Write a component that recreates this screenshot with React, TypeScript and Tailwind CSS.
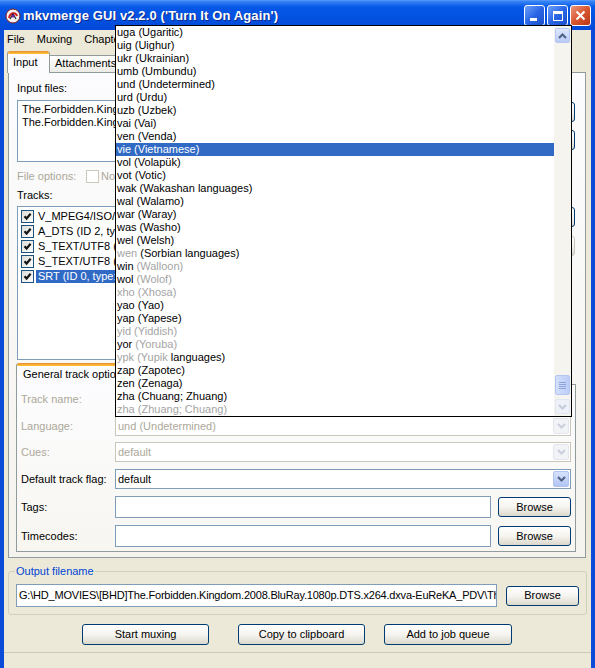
import React from "react";

const FONT = "font-['Liberation_Sans',Arial,sans-serif]";

function Chevron({ up = false, color = "#4d6185" }: { up?: boolean; color?: string }) {
  return (
    <svg width="9" height="6" viewBox="0 0 9 6">
      <polyline
        points={up ? "1,5 4.5,1.5 8,5" : "1,1 4.5,4.5 8,1"}
        fill="none"
        stroke={color}
        strokeWidth="2"
      />
    </svg>
  );
}

function XpButton({
  className = "",
  children,
  disabled = false,
}: {
  className?: string;
  children?: React.ReactNode;
  disabled?: boolean;
}) {
  return (
    <div
      className={`flex items-center justify-center rounded-[3px] border bg-linear-to-b from-[#ffffff] via-[#f5f4ef] to-[#dcd8cc] ${
        disabled ? "border-[#c9c7ba] text-[#aca899]" : "border-[#003c74] text-black"
      } ${className}`}
    >
      {children}
    </div>
  );
}

function Check({ checked = false, disabled = false }: { checked?: boolean; disabled?: boolean }) {
  return (
    <div
      className={`w-[13px] h-[13px] shrink-0 border flex items-center justify-center ${
        disabled ? "border-[#cac8bb] bg-white" : "border-[#1c5180] bg-linear-to-br from-[#dcdcd7] to-[#ffffff]"
      }`}
    >
      {checked && (
        <svg width="9" height="9" viewBox="0 0 9 9">
          <polyline points="1.5,4.2 3.6,6.5 7.6,1.8" fill="none" stroke="#161616" strokeWidth="2.2" />
        </svg>
      )}
    </div>
  );
}

function Combo({ text, disabled = false }: { text: string; disabled?: boolean }) {
  return (
    <div
      className={`flex-1 h-full flex items-center border bg-white pl-[2px] pr-[1px] ${
        disabled ? "border-[#c9c7ba] text-[#aca899]" : "border-[#7f9db9] text-black"
      }`}
    >
      <span className="flex-1 truncate">{text}</span>
      <div
        className={`w-[16px] h-[calc(100%-2px)] rounded-[2px] border flex items-center justify-center ${
          disabled
            ? "bg-[#f2f3f6] border-[#e3e6ed]"
            : "bg-linear-to-b from-[#d6e1fd] to-[#b2c5f4] border-[#b0c3ee]"
        }`}
      >
        <Chevron color={disabled ? "#c8cedc" : "#4d6185"} />
      </div>
    </div>
  );
}

function TextBox({ className = "" }: { className?: string }) {
  return <div className={`h-full border border-[#7f9db9] bg-white ${className}`} />;
}

const items: string[] = [
  "uga (Ugaritic)",
  "uig (Uighur)",
  "ukr (Ukrainian)",
  "umb (Umbundu)",
  "und (Undetermined)",
  "urd (Urdu)",
  "uzb (Uzbek)",
  "vai (Vai)",
  "ven (Venda)",
  "vie (Vietnamese)",
  "vol (Volapük)",
  "vot (Votic)",
  "wak (Wakashan languages)",
  "wal (Walamo)",
  "war (Waray)",
  "was (Washo)",
  "wel (Welsh)",
  "|wen| (Sorbian languages)",
  "win |(Walloon)",
  "wol |(Wolof)",
  "|xho (Xhosa)",
  "yao (Yao)",
  "yap (Yapese)",
  "|yid (Yiddish)",
  "yor |(Yoruba)",
  "|ypk (Yupik| languages)",
  "zap (Zapotec)",
  "zen (Zenaga)",
  "zha (Chuang; Zhuang)",
  "|zha (Zhuang; Chuang)",
];

function Item({ text, selected }: { text: string; selected: boolean }) {
  const parts = text.split("|");
  return (
    <div
      className={`h-[13px] leading-[13px] pl-[1px] whitespace-pre ${
        selected ? "bg-[#316ac5] text-white" : "text-black"
      }`}
    >
      {parts.map((p, i) => (
        <span key={i} className={i % 2 === 1 ? "text-[#a4a4a4]" : ""}>
          {p}
        </span>
      ))}
    </div>
  );
}

export default function App() {
  return (
    <div
      className={`relative w-[595px] h-[668px] overflow-hidden bg-[#0a4bd8] text-[11px] leading-[13px] ${FONT}`}
    >
      {/* Title bar */}
      <div className="h-[30px] flex items-center pl-[5px] pr-[4px] bg-linear-to-b from-[#3a86f6] via-[#0658e8] via-20% to-[#0249d8] border-t border-[#4d95f8]">
        <svg width="16" height="16" viewBox="0 0 16 16" className="shrink-0">
          <circle cx="8" cy="8" r="7" fill="#f4f0f0" stroke="#7a1d1d" strokeWidth="1" />
          <path d="M4 10 C5 4, 11 4, 12 8" fill="none" stroke="#d21f1f" strokeWidth="2" />
          <path d="M5 11 L8 6 L11 11" fill="none" stroke="#222" strokeWidth="1.2" />
          <circle cx="8" cy="8" r="1.5" fill="#6a1ea0" />
        </svg>
        <span className="ml-[2px] text-white font-bold text-[13px] leading-[16px] tracking-[0.12px] [text-shadow:1px_1px_0_#0b2a8c]">
          mkvmerge GUI v2.2.0 ('Turn It On Again')
        </span>
        <div className="flex-1" />
        <div className="flex gap-[2px]">
          <div className="w-[21px] h-[21px] rounded-[3px] border border-white bg-linear-to-br from-[#6ea0fa] via-[#2a66e6] to-[#1c4fc8] flex items-end pl-[5px] pb-[4px]">
            <div className="w-[7px] h-[3px] bg-white" />
          </div>
          <div className="w-[21px] h-[21px] rounded-[3px] border border-white bg-linear-to-br from-[#6ea0fa] via-[#2a66e6] to-[#1c4fc8] flex items-center justify-center">
            <div className="w-[10px] h-[10px] border border-white border-t-[3px]" />
          </div>
          <div className="w-[21px] h-[21px] rounded-[3px] border border-white bg-linear-to-br from-[#ea9478] via-[#d9562f] to-[#b93616] flex items-center justify-center">
            <svg width="11" height="11" viewBox="0 0 11 11">
              <path d="M1.5 1.5 L9.5 9.5 M9.5 1.5 L1.5 9.5" stroke="white" strokeWidth="2" />
            </svg>
          </div>
        </div>
      </div>

      {/* Client area */}
      <div className="mx-[4px] h-[638px] bg-[#ece9d8] flex flex-col">
        {/* Menu */}
        <div className="h-[19px] flex items-center pl-[3px] gap-[12px] text-black">
          <span>File</span>
          <span>Muxing</span>
          <span>Chapter editor</span>
        </div>

        {/* Tabs */}
        <div className="mt-[2px] h-[22px] -mb-[1px] flex items-end pl-[3px] relative z-10">
          <div className="w-[43px] h-[22px] flex flex-col border-x border-[#919b9c] rounded-t-[3px] overflow-hidden bg-[#fcfcfe]">
            <div className="h-[3px] bg-linear-to-b from-[#e68b2c] to-[#ffc73c]" />
            <div className="mt-[2px] pl-[5px] text-black">Input</div>
          </div>
          <div className="w-[74px] h-[17px] mb-[1px] border-t border-r border-[#919b9c] rounded-tr-[3px] bg-linear-to-b from-[#ffffff] to-[#ecebe5] pl-[5px] pt-[1px] text-black">
            Attachments
          </div>
          <div className="w-[50px] h-[17px] mb-[1px] border-t border-r border-[#919b9c] rounded-tr-[3px] bg-linear-to-b from-[#ffffff] to-[#ecebe5]" />
        </div>

        {/* Tab panel */}
        <div className="ml-[4px] w-[578px] h-[486px] border border-[#919b9c] bg-linear-to-b from-[#fcfcfe] to-[#f4f3ee] flex flex-col pl-[8px]">
          <div className="mt-[9px] h-[13px] text-black">Input files:</div>
          <div className="mt-[5px] flex">
            <div className="w-[475px] h-[62px] border border-[#7f9db9] bg-white pt-[2px] pl-[4px] text-black whitespace-nowrap overflow-hidden">
              <div>The.Forbidden.Kingdom.2008.BluRay.mkv</div>
              <div>The.Forbidden.Kingdom.2008.BluRay.srt</div>
            </div>
            <div className="ml-[8px] w-[75px] pt-[2px] flex flex-col gap-[8px]">
              <XpButton className="h-[20px]" />
              <XpButton className="h-[20px]" />
            </div>
          </div>
          <div className="mt-[8px] h-[13px] flex items-center text-[#aca899]">
            <span className="w-[69px]">File options:</span>
            <Check disabled />
            <span className="ml-[2px]">No chapters</span>
          </div>
          <div className="mt-[6px] h-[13px] text-black">Tracks:</div>
          <div className="mt-[4px] flex">
            <div className="w-[475px] h-[154px] border border-[#7f9db9] bg-white pt-[2px] pl-[3px] text-black whitespace-nowrap overflow-hidden">
              {[
                "V_MPEG4/ISO/AVC (ID 1, type: video)",
                "A_DTS (ID 2, type: audio)",
                "S_TEXT/UTF8 (ID 3, type: subtitles)",
                "S_TEXT/UTF8 (ID 4, type: subtitles)",
                "SRT (ID 0, type: subtitles)",
              ].map((t, i) => (
                <div key={i} className="h-[15px] flex items-center">
                  <Check checked />
                  <span className={`ml-[2px] px-[2px] ${i === 4 ? "bg-[#316ac5] text-white" : ""}`}>{t}</span>
                </div>
              ))}
            </div>
            <div className="ml-[8px] w-[75px] pt-[1px] flex flex-col gap-[9px]">
              <XpButton className="h-[20px]" />
              <XpButton className="h-[20px]" disabled />
            </div>
          </div>

          {/* Inner tab control */}
          <div className="mt-[3px] -ml-[1px] w-[560px] flex flex-col">
            <div className="h-[22px] -mb-[1px] flex items-end relative z-10">
              <div className="w-[118px] h-[22px] flex flex-col border-x border-[#919b9c] rounded-t-[3px] overflow-hidden bg-[#fcfcfe]">
                <div className="h-[3px] bg-linear-to-b from-[#e68b2c] to-[#ffc73c]" />
                <div className="mt-[2px] pl-[6px] text-black whitespace-nowrap">General track options</div>
              </div>
              <div className="w-[140px] h-[17px] mb-[1px] border-t border-r border-[#919b9c] bg-linear-to-b from-[#ffffff] to-[#ecebe5]" />
            </div>
            <div className="h-[168px] border border-[#919b9c] bg-linear-to-b from-[#fcfcfe] to-[#f7f6f1] flex flex-col pl-[4px] pr-[4px]">
              <div className="mt-[4px] h-[21px] flex items-center">
                <span className="w-[94px] text-[#aca899]">Track name:</span>
                <TextBox className="flex-1" />
              </div>
              <div className="mt-[6px] h-[20px] flex items-center">
                <span className="w-[94px] text-[#aca899]">Language:</span>
                <Combo text="und (Undetermined)" disabled />
              </div>
              <div className="mt-[6px] h-[20px] flex items-center">
                <span className="w-[94px] text-[#aca899]">Cues:</span>
                <Combo text="default" disabled />
              </div>
              <div className="mt-[7px] h-[20px] flex items-center">
                <span className="w-[94px] text-black">Default track flag:</span>
                <Combo text="default" />
              </div>
              <div className="mt-[7px] h-[22px] flex items-center">
                <span className="w-[94px] text-black">Tags:</span>
                <TextBox className="flex-1" />
                <XpButton className="ml-[7px] w-[73px] h-[20px]">Browse</XpButton>
              </div>
              <div className="mt-[7px] h-[22px] flex items-center">
                <span className="w-[94px] text-black">Timecodes:</span>
                <TextBox className="flex-1" />
                <XpButton className="ml-[7px] w-[73px] h-[20px]">Browse</XpButton>
              </div>
            </div>
          </div>
        </div>

        {/* Output filename */}
        <fieldset className="mt-[7px] ml-[4px] w-[579px] border border-[#d0d0bf] rounded-[3px] px-[7px] pb-[7px]">
          <legend className="px-[1px] -ml-[1px] text-[#0046d5] leading-[13px]">Output filename</legend>
          <div className="mt-[6px] flex items-center">
            <div className="w-[481px] h-[23px] border border-[#7f9db9] bg-white pl-[2px] flex items-center text-black whitespace-nowrap overflow-hidden tracking-[-0.2px]">
              G:\HD_MOVIES\[BHD]The.Forbidden.Kingdom.2008.BluRay.1080p.DTS.x264.dxva-EuReKA_PDV\Th
            </div>
            <XpButton className="ml-[9px] w-[73px] h-[20px]">Browse</XpButton>
          </div>
        </fieldset>

        {/* Buttons */}
        <div className="mt-[9px] h-[21px] flex">
          <XpButton className="ml-[78px] w-[127px] h-[21px]">Start muxing</XpButton>
          <XpButton className="ml-[29px] w-[127px] h-[21px]">Copy to clipboard</XpButton>
          <XpButton className="ml-[19px] w-[128px] h-[21px]">Add to job queue</XpButton>
        </div>

        {/* Status bar */}
        <div className="mt-[7px] flex-1 border-t border-[#cdcabb] bg-[#ece9d8]" />
      </div>

      {/* Dropdown list overlay */}
      <div className="absolute left-[115px] top-[25px] w-[457px] h-[392px] border border-black bg-white flex z-20">
        <div className="flex-1 flex flex-col overflow-hidden">
          {items.map((t, i) => (
            <Item key={i} text={t} selected={i === 9} />
          ))}
        </div>
        <div className="w-[17px] h-full bg-[#f5f4ef] flex flex-col items-center">
          <div className="mt-[2px] w-[15px] h-[15px] rounded-[2px] border border-[#b7c9f3] bg-linear-to-b from-[#dfe8fe] to-[#b9cbf5] flex items-center justify-center">
            <Chevron up />
          </div>
          <div className="flex-1 w-full flex flex-col items-center justify-end pb-[4px]">
            <div className="w-[15px] h-[20px] rounded-[2px] border border-[#b3c6f2] bg-linear-to-r from-[#d3dffc] to-[#bccdf6] flex flex-col items-center justify-center gap-[1px]">
              <div className="w-[7px] h-[1px] bg-[#8ca4da]" />
              <div className="w-[7px] h-[1px] bg-[#8ca4da]" />
              <div className="w-[7px] h-[1px] bg-[#8ca4da]" />
              <div className="w-[7px] h-[1px] bg-[#8ca4da]" />
            </div>
          </div>
          <div className="mb-[2px] w-[15px] h-[15px] rounded-[2px] border border-[#e1e6f0] bg-[#eef1f7] flex items-center justify-center">
            <Chevron color="#c3cadb" />
          </div>
        </div>
      </div>
    </div>
  );
}
